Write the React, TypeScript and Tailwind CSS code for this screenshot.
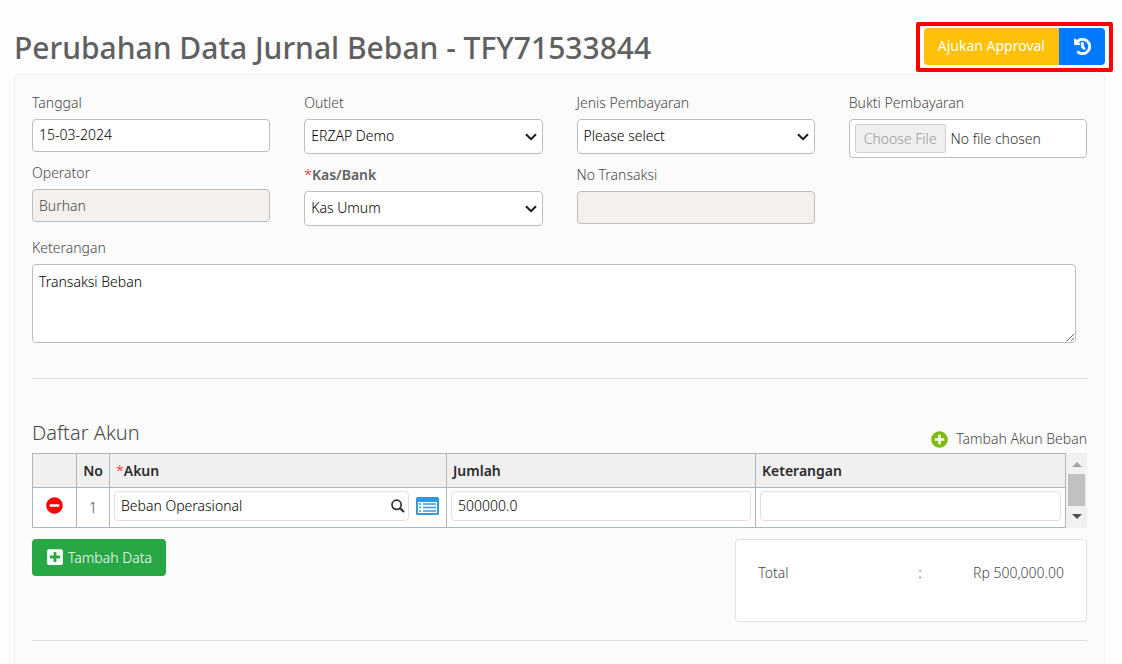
import type { ReactNode } from "react";
import { FaHistory, FaMinusCircle, FaPlusCircle, FaPlusSquare } from "react-icons/fa";

const control =
  "block w-full rounded border border-[#bdbdbd] bg-white px-[6px] text-sm leading-5 font-light text-black disabled:bg-[#f4f0ed] disabled:text-[#484848]";
const cellInput =
  "block h-[30px] w-full min-w-0 rounded border border-[#e0e0e0] bg-white px-[6px] pb-[2px] text-sm leading-5 font-light text-black";

type FieldProps = { id: string; label: string; required?: boolean; children: ReactNode };

function Field({ id, label, required, children }: FieldProps) {
  return (
    <div>
      <label
        htmlFor={id}
        className={
          required ? "block pt-[11px] pb-[6px] font-semibold text-[#606060]" : "block pt-[11px] pb-[6px]"
        }
      >
        {required && <span className="font-light text-[#ff0000]">*</span>}
        {label}
      </label>
      {children}
    </div>
  );
}

function SelectBox({ id, value }: { id: string; value: string }) {
  return (
    <div className="relative">
      <select id={id} defaultValue={value} className={`${control} h-[35px] appearance-none pr-6 pb-px`}>
        <option>{value}</option>
      </select>
      <svg
        aria-hidden="true"
        viewBox="0 0 12 8"
        className="pointer-events-none absolute top-[14px] right-[6px] h-2 w-3"
        fill="none"
        stroke="#1a1a1a"
        strokeWidth="2"
      >
        <path d="M1 1.2 6 6.2 11 1.2" />
      </svg>
    </div>
  );
}

function SearchIcon() {
  return (
    <svg aria-hidden="true" viewBox="0 0 14 14" className="h-[14px] w-[14px]" fill="none" stroke="#333">
      <circle cx="5.6" cy="5.8" r="4.6" strokeWidth="1.7" />
      <path d="M9 9.3 13 13" strokeWidth="2.2" />
    </svg>
  );
}

function ListIcon() {
  return (
    <svg aria-hidden="true" viewBox="0 0 23 18" className="h-[18px] w-[23px]">
      <rect width="23" height="18" rx="1.5" fill="#3498db" />
      <rect x="2" y="5" width="19" height="11" fill="#fff" />
      <path d="M3 7h2M3 10.5h2M3 14h2" stroke="#3498db" strokeWidth="1.6" />
      <path d="M7 7h13M7 10.5h13M7 14h13" stroke="#3498db" strokeWidth="1.4" />
    </svg>
  );
}

export default function App() {
  return (
    <div className="flex min-h-screen flex-col bg-[#fdfdfd] pr-[17px] pl-[14px] font-['Noto_Sans',sans-serif] text-sm leading-5 font-light text-[#484848]">
      <header className="flex items-start justify-between pt-7">
        <h1 className="text-[30px] leading-10 font-medium text-[#606060]">Perubahan Data Jurnal Beban - TFY71533844</h1>
        <div className="relative flex h-[37px] shrink-0">
          <button type="button" className="rounded-l bg-[#ffc107] px-[14px] pb-[2px] font-normal text-white">
            Ajukan Approval
          </button>
          <button
            type="button"
            aria-label="Riwayat"
            className="flex w-[46px] items-center justify-center rounded-r bg-[#007bff] text-white"
          >
            <FaHistory className="h-[17px] w-[17px]" stroke="currentColor" strokeWidth="24" />
          </button>
          <div className="pointer-events-none absolute -inset-x-2 -top-[6px] -bottom-[7px] rounded-xs border-4 border-[#ff0000]" />
        </div>
      </header>

      <main className="mt-[6px] grow rounded-t border border-b-0 border-[#f2f2f2] bg-[#fbfbfb] px-[17px] pt-[7px] pb-6">
        <form>
          <div className="grid grid-cols-4 gap-x-[34px]">
            <div>
              <Field id="tanggal" label="Tanggal">
                <input id="tanggal" defaultValue="15-03-2024" className={`${control} h-[33px] pb-[2px]`} />
              </Field>
              <Field id="operator" label="Operator">
                <input id="operator" defaultValue="Burhan" disabled className={`${control} h-[33px]`} />
              </Field>
            </div>
            <div>
              <Field id="outlet" label="Outlet">
                <SelectBox id="outlet" value="ERZAP Demo" />
              </Field>
              <Field id="kas" label="Kas/Bank" required>
                <SelectBox id="kas" value="Kas Umum" />
              </Field>
            </div>
            <div>
              <Field id="jenis" label="Jenis Pembayaran">
                <SelectBox id="jenis" value="Please select" />
              </Field>
              <Field id="notrans" label="No Transaksi">
                <input id="notrans" disabled className={`${control} h-[33px]`} />
              </Field>
            </div>
            <Field id="bukti" label="Bukti Pembayaran">
              <input
                id="bukti"
                type="file"
                disabled
                className="block h-[39px] w-full rounded border border-[#bdbdbd] bg-white px-[5px] py-1 text-sm leading-5 font-light text-[#303030] file:mr-[5px] file:h-[29px] file:rounded-xs file:border file:border-solid file:border-[#d0d0d0] file:bg-[#efefef] file:px-2 file:text-[#999999]"
              />
            </Field>
          </div>

          <div className="mt-px pr-[11px]">
            <Field id="keterangan" label="Keterangan">
              <textarea id="keterangan" defaultValue="Transaksi Beban" className={`${control} h-[79px] resize py-[7px]`} />
            </Field>
          </div>

          <hr className="mt-[35px] border-[#d9dcdf]" />

          <section>
            <div className="flex items-end justify-between pt-[40px]">
              <h2 className="pb-[6px] text-xl leading-7">Daftar Akun</h2>
              <a href="#tambah-akun" className="flex items-center gap-2 pb-1">
                <FaPlusCircle className="h-[17px] w-[17px] text-[#7fba14]" />
                Tambah Akun Beban
              </a>
            </div>
            <div className="flex">
              <table className="grow table-fixed border-collapse bg-white">
                <thead>
                  <tr className="h-[34px] bg-[#f0f0f0] text-left text-[#2b2b2b]">
                    <th className="w-[44px] border border-[#adb5bd]" aria-label="Hapus" />
                    <th className="w-[33px] border border-[#adb5bd] text-center font-semibold">No</th>
                    <th className="w-[337px] border border-[#adb5bd] px-[6px] font-semibold">
                      <span className="font-light text-[#ff0000]">*</span>Akun
                    </th>
                    <th className="w-[309px] border border-[#adb5bd] px-[6px] font-semibold">Jumlah</th>
                    <th className="border border-[#adb5bd] px-[6px] font-semibold">Keterangan</th>
                  </tr>
                </thead>
                <tbody>
                  <tr className="h-10">
                    <td className="border border-[#adb5bd] pb-[4px]">
                      <button type="button" aria-label="Hapus baris" className="mx-auto block text-[#ff0000]">
                        <FaMinusCircle className="h-[17px] w-[17px]" />
                      </button>
                    </td>
                    <td className="border border-[#adb5bd] text-center">1</td>
                    <td className="border border-[#adb5bd] px-1 pt-[3px] pb-[6px]">
                      <div className="flex items-center gap-[7px] pr-[3px]">
                        <div className="relative grow">
                          <input aria-label="Akun" defaultValue="Beban Operasional" className={cellInput} />
                          <div className="pointer-events-none absolute top-2 right-[4px]">
                            <SearchIcon />
                          </div>
                        </div>
                        <button type="button" aria-label="Daftar akun">
                          <ListIcon />
                        </button>
                      </div>
                    </td>
                    <td className="border border-[#adb5bd] px-1 pt-[3px] pb-[6px]">
                      <input aria-label="Jumlah" defaultValue="500000.0" className={cellInput} />
                    </td>
                    <td className="border border-[#adb5bd] px-1 pt-[3px] pb-[6px]">
                      <input aria-label="Keterangan akun" className={cellInput} />
                    </td>
                  </tr>
                </tbody>
              </table>
              <div aria-hidden="true" className="flex w-[21px] shrink-0 flex-col items-center bg-[#f1f1f1]">
                <svg viewBox="0 0 10 5" className="mt-[9px] h-[5px] w-[10px]" fill="#a3a3a3">
                  <path d="M0 5 5 0 10 5z" />
                </svg>
                <div className="mt-[7px] h-8 w-[17px] bg-[#c1c1c1]" />
                <svg viewBox="0 0 10 5" className="mt-2 h-[5px] w-[10px]" fill="#505050">
                  <path d="M0 0 5 5 10 0z" />
                </svg>
              </div>
            </div>
          </section>

          <div className="mt-[11px] flex items-start justify-between">
            <button
              type="button"
              className="flex h-[37px] items-center gap-1 rounded bg-[#28a745] px-[14px] text-white"
            >
              <FaPlusSquare className="mb-[2px] h-[18px] w-[18px]" />
              Tambah Data
            </button>
            <dl className="flex h-[83px] w-1/3 rounded border border-[#dee2e6] bg-white px-[22px] pt-[23px]">
              <dt className="w-[160px]">Total</dt>
              <dd aria-hidden="true">:</dd>
              <dd className="grow text-right">Rp 500,000.00</dd>
            </dl>
          </div>
          <hr className="mt-[18px] border-[#d9dcdf]" />
        </form>
      </main>
    </div>
  );
}
